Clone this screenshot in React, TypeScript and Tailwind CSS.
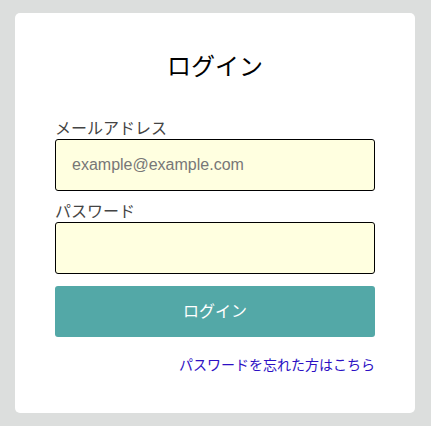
import React from 'react';

const App = () => {
  return (
    <div
      className="min-h-[426px] bg-[#dcdedd] pt-[13px] px-[15px]"
      style={{ fontFamily: '"Liberation Sans", "Noto Sans CJK JP", sans-serif' }}
    >
      <div className="w-[400px] h-[400px] bg-white rounded-[5px] px-10 pt-[38px]">
        <h1 className="text-center text-2xl leading-8 text-black">ログイン</h1>

        <form className="mt-[36px] flex flex-col" onSubmit={(e) => e.preventDefault()}>
          <label className="text-base leading-5 text-[#444]">メールアドレス</label>
          <input
            type="email"
            placeholder="example@example.com"
            className="h-[52px] w-full border border-black rounded-[3px] bg-[#ffffe0] px-4 text-base text-black placeholder:text-[#777] outline-none"
          />

          <label className="mt-[11px] text-base leading-5 text-[#444]">パスワード</label>
          <input
            type="password"
            className="h-[52px] w-full border border-black rounded-[3px] bg-[#ffffe0] px-4 text-base text-black outline-none"
          />

          <button
            type="submit"
            className="mt-3 h-[51px] w-full rounded-[3px] bg-[#53a8a7] text-base text-white"
          >
            ログイン
          </button>

          <div className="mt-4 text-right">
            <a href="#" className="text-sm leading-5 text-[#2d10c4]">
              パスワードを忘れた方はこちら
            </a>
          </div>
        </form>
      </div>
    </div>
  );
};

export default App;
